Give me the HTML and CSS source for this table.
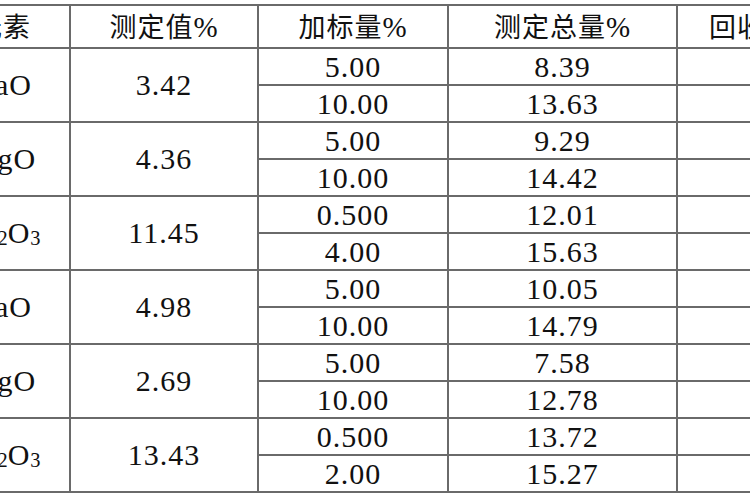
FILE: index.html
```html
<!DOCTYPE html>
<html>
<head>
<meta charset="utf-8">
<title>加标回收</title>
<link rel="stylesheet" href="styles.css">
</head>
<body>
<table class="data">
  <colgroup>
    <col class="c0"><col class="c1"><col class="c2"><col class="c3"><col class="c4">
  </colgroup>
  <thead>
    <tr class="head">
      <th><span class="cjk">元素</span></th>
      <th><span class="cjk">测定值</span>%</th>
      <th><span class="cjk">加标量</span>%</th>
      <th><span class="cjk">测定总量</span>%</th>
      <th><span class="cjk">回收率</span>%</th>
    </tr>
  </thead>
  <tbody>
    <tr class="sub"><td rowspan="2">CaO</td><td rowspan="2">3.42</td><td>5.00</td><td>8.39</td><td></td></tr>
    <tr class="sub"><td>10.00</td><td>13.63</td><td></td></tr>
    <tr class="sub"><td rowspan="2">MgO</td><td rowspan="2">4.36</td><td>5.00</td><td>9.29</td><td></td></tr>
    <tr class="sub"><td>10.00</td><td>14.42</td><td></td></tr>
    <tr class="sub"><td rowspan="2">Fe<sub>2</sub>O<sub>3</sub></td><td rowspan="2">11.45</td><td>0.500</td><td>12.01</td><td></td></tr>
    <tr class="sub"><td>4.00</td><td>15.63</td><td></td></tr>
    <tr class="sub"><td rowspan="2">CaO</td><td rowspan="2">4.98</td><td>5.00</td><td>10.05</td><td></td></tr>
    <tr class="sub"><td>10.00</td><td>14.79</td><td></td></tr>
    <tr class="sub"><td rowspan="2">MgO</td><td rowspan="2">2.69</td><td>5.00</td><td>7.58</td><td></td></tr>
    <tr class="sub"><td>10.00</td><td>12.78</td><td></td></tr>
    <tr class="sub"><td rowspan="2">Fe<sub>2</sub>O<sub>3</sub></td><td rowspan="2">13.43</td><td>0.500</td><td>13.72</td><td></td></tr>
    <tr class="sub"><td>2.00</td><td>15.27</td><td></td></tr>
  </tbody>
</table>
</body>
</html>
```

FILE: styles.css
```css
html, body {
  margin: 0;
  padding: 0;
  background: #ffffff;
  overflow: hidden;
  width: 750px;
  height: 500px;
}

.data {
  table-layout: fixed;
  border-collapse: collapse;
  width: 914px;
  margin: 4px 0 0 -65px;
  font-family: "Liberation Serif", "Times New Roman", Tinos, serif;
  font-size: 30px;
  letter-spacing: 1px;
  color: #111111;
}

.c0 { width: 134px; }
.c1 { width: 188px; }
.c2 { width: 190px; }
.c3 { width: 229px; }
.c4 { width: 173px; }

.data th,
.data td {
  border: 2px solid #6a6a6a;
  padding: 0;
  text-align: center;
  vertical-align: middle;
  line-height: 1;
  font-weight: normal;
}

.data th {
  font-size: 29px;
  letter-spacing: 1px;
}

.cjk {
  font-family: "Noto Sans CJK SC", sans-serif;
  font-size: 27px;
  font-weight: 400;
  letter-spacing: 1px;
}

.head { height: 43px; }
.sub { height: 37px; }

.data sub {
  font-size: 0.68em;
  vertical-align: -0.12em;
  line-height: 0;
  letter-spacing: 0;
}
```
